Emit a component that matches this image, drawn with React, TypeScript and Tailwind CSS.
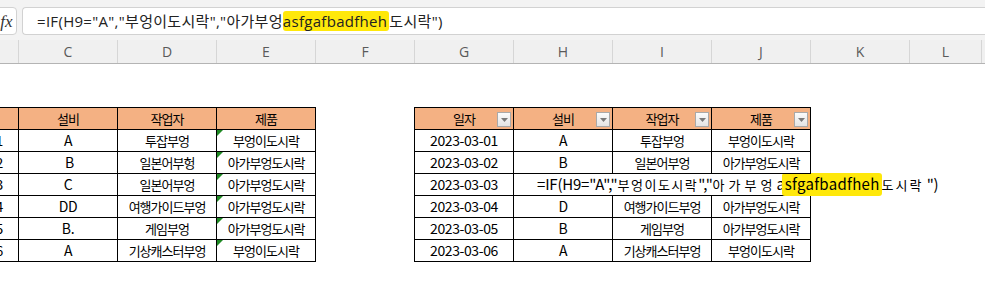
import React from "react"

const cjk = "font-['Noto_Sans_CJK_KR',sans-serif]"
const ko = /[가-힣]/

const letters = ["C", "D", "E", "F", "G", "H", "I", "J", "K"]

const leftRows = [
  ["2023-03-01", "A", "투잡부엉", "부엉이도시락"],
  ["2023-03-02", "\u00a0B", "일본어부헝", "아가부엉도시락"],
  ["2023-03-03", "C", "일본어부엉", "아가부엉도시락"],
  ["2023-03-04", "DD", "여행가이드부엉", "아가부엉도시락"],
  ["2023-03-05", "B.", "게임부엉", "아가부엉도시락"],
  ["2023-03-06", "A", "기상캐스터부엉", "부엉이도시락"],
]

const rightRows = [
  ["2023-03-01", "A", "투잡부엉", "부엉이도시락"],
  ["2023-03-02", "B", "일본어부엉", "아가부엉도시락"],
  null,
  ["2023-03-04", "D", "여행가이드부엉", "아가부엉도시락"],
  ["2023-03-05", "B", "게임부엉", "아가부엉도시락"],
  ["2023-03-06", "A", "기상캐스터부엉", "부엉이도시락"],
]

function Txt({ s }: { s: string }) {
  if (ko.test(s)) return <span className="text-[13px] tracking-[-1px]">{s}</span>
  return <span className="text-[14px] tracking-[-0.4px]">{s}</span>
}

function DropBtn() {
  return (
    <div className="absolute right-[2px] top-[4px] flex h-[15px] w-[14px] items-center justify-center border border-[#a9a9a9] bg-linear-to-b from-[#fbfbfb] to-[#e4e4e4]">
      <svg width="7" height="4" viewBox="0 0 7 4">
        <path d="M0 0h7L3.5 4z" fill="#7a7a7a" />
      </svg>
    </div>
  )
}

function Head({ s, drop }: { s: string; drop?: boolean }) {
  return (
    <div className="relative flex h-[22px] items-center justify-center border-r border-b border-black bg-[#f4b183]">
      <Txt s={s} />
      {drop && <DropBtn />}
    </div>
  )
}

function Cell({ s, flag }: { s: string; flag?: boolean }) {
  return (
    <div className="relative flex h-[22px] items-center justify-center whitespace-nowrap border-r border-b border-black">
      {flag && <div className="absolute left-0 top-0 h-0 w-0 border-t-[6px] border-r-[6px] border-t-[#1f8a24] border-r-transparent" />}
      <Txt s={s} />
    </div>
  )
}

export default function App() {
  return (
    <div className={`h-[285px] w-[985px] overflow-hidden bg-white text-black ${cjk}`}>
      {/* formula bar */}
      <div className="flex h-[40px] items-start gap-[5px] bg-[#f3f3f3] pt-[7px]">
        <div className="-ml-[4px] flex h-[28px] w-[21px] items-center justify-center rounded-r-[4px] border border-[#d2d2d2] bg-white">
          <span className="font-['Liberation_Serif',serif] text-[17px] italic leading-none text-[#333]">fx</span>
        </div>
        <div className="flex h-[28px] flex-1 items-center rounded-l-[4px] border border-r-0 border-[#d2d2d2] bg-white pl-[14px] font-['Open_Sans','Noto_Sans_CJK_KR',sans-serif] text-[15px] tracking-[0.3px] text-[#222]">
          <span className="whitespace-pre">
            =IF(H9="A","<span className={cjk}>부엉이도시락</span>","<span className={cjk}>아가부엉</span>
            <span className="rounded-[3px] bg-[#ffe80a] pr-[2px]">asfgafbadfheh</span>
            <span className={cjk}>도시락</span>")
          </span>
        </div>
      </div>

      {/* column headers */}
      <div className="flex h-[24px] border-b border-[#b4b4b4] bg-[#f0f0f0] font-['Open_Sans',sans-serif] text-[14px] text-[#5a5a5a]">
        <div className="w-[19px] border-r border-[#d6d6d6]" />
        {letters.map((l) => (
          <div key={l} className="flex w-[99px] items-center justify-center border-r border-[#d6d6d6]">
            {l}
          </div>
        ))}
        <div className="flex w-[72px] items-center justify-center border-r border-[#d6d6d6]">L</div>
        <div className="flex-1" />
      </div>

      {/* sheet */}
      <div className="flex items-start pt-[43px]">
        <div className="-ml-[81px] grid grid-cols-[repeat(4,99px)] border-l border-t border-black">
          <Head s="일자" />
          <Head s="설비" />
          <Head s="작업자" />
          <Head s="제품" />
          {leftRows.map((r, i) => (
            <React.Fragment key={i}>
              <Cell s={r[0]} />
              <Cell s={r[1]} />
              <Cell s={r[2]} />
              <Cell s={r[3]} flag />
            </React.Fragment>
          ))}
        </div>

        <div className="ml-[98px] grid grid-cols-[repeat(4,99px)] border-l border-t border-black">
          <Head s="일자" drop />
          <Head s="설비" drop />
          <Head s="작업자" drop />
          <Head s="제품" drop />
          {rightRows.map((r, i) =>
            r ? (
              <React.Fragment key={i}>
                <Cell s={r[0]} />
                <Cell s={r[1]} />
                <Cell s={r[2]} />
                <Cell s={r[3]} />
              </React.Fragment>
            ) : (
              <React.Fragment key={i}>
                <Cell s="2023-03-03" />
                <div className="col-span-3 -mr-px flex h-[22px] items-center overflow-visible whitespace-pre border-b border-black pl-[23px] text-[15px] tracking-[-0.2px]">
                  <span>=IF(H9="A","</span>
                  <span className="text-[13px] tracking-[1.5px]">부엉이도시락</span>
                  <span>","</span>
                  <span className="text-[13px] tracking-[4px]">아가부엉</span>
                  <span>a</span>
                  <span className="-ml-[3px] rounded-[3px] bg-[#ffe80a] pl-[3px] pr-[2px] tracking-[0.3px]">sfgafbadfheh</span>
                  <span className="text-[13px] tracking-[2px]">도시락</span>
                  <span> ")</span>
                </div>
              </React.Fragment>
            ),
          )}
        </div>
      </div>
    </div>
  )
}
